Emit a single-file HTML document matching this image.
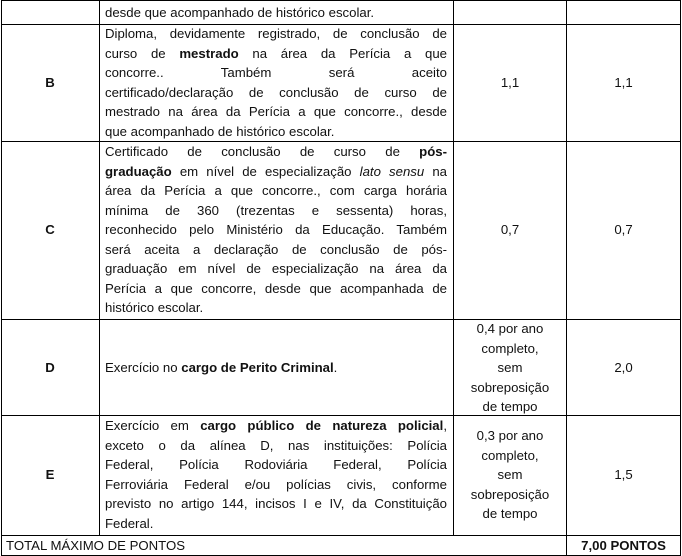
<!DOCTYPE html><html><head><meta charset="utf-8"><style>
body{margin:0;width:682px;height:556px;background:#fff;position:relative;overflow:hidden;font-family:"Liberation Sans",sans-serif;font-size:13.2px;color:#111}
.h{position:absolute;height:1px;background:#000;left:1px;width:680px}
.v{position:absolute;width:1px;background:#000}
.t{position:absolute;left:105px;width:342px;line-height:19.5px}
.t div{text-align:justify;text-align-last:justify;white-space:nowrap}
.t div.l{text-align-last:left}
.c{position:absolute;text-align:center;line-height:19.5px}
b{font-weight:bold}
</style></head><body>
<div class="h" style="top:0"></div>
<div class="h" style="top:24px"></div>
<div class="h" style="top:141px"></div>
<div class="h" style="top:319px"></div>
<div class="h" style="top:415px"></div>
<div class="h" style="top:535px"></div>
<div class="h" style="top:555px"></div>
<div class="v" style="left:1px;top:0;height:556px"></div>
<div class="v" style="left:99px;top:0;height:535px"></div>
<div class="v" style="left:453px;top:0;height:535px"></div>
<div class="v" style="left:566px;top:0;height:556px"></div>
<div class="v" style="left:680px;top:0;height:556px"></div>

<div class="t" style="top:3px"><div class="l">desde que acompanhado de histórico escolar.</div></div>

<div class="c" style="left:1px;width:98px;top:73px"><b>B</b></div>
<div class="t" style="top:24px">
<div>Diploma, devidamente registrado, de conclusão de</div>
<div>curso de <b>mestrado</b> na área da Perícia a que</div>
<div>concorre.. Também será aceito</div>
<div>certificado/declaração de conclusão de curso de</div>
<div>mestrado na área da Perícia a que concorre., desde</div>
<div class="l">que acompanhado de histórico escolar.</div></div>
<div class="c" style="left:454px;width:112px;top:73px">1,1</div>
<div class="c" style="left:567px;width:113px;top:73px">1,1</div>

<div class="c" style="left:1px;width:98px;top:220px"><b>C</b></div>
<div class="t" style="top:142px">
<div>Certificado de conclusão de curso de <b>pós-</b></div>
<div><b>graduação</b> em nível de especialização <i>lato sensu</i> na</div>
<div>área da Perícia a que concorre., com carga horária</div>
<div>mínima de 360 (trezentas e sessenta) horas,</div>
<div>reconhecido pelo Ministério da Educação. Também</div>
<div>será aceita a declaração de conclusão de pós-</div>
<div>graduação em nível de especialização na área da</div>
<div>Perícia a que concorre, desde que acompanhada de</div>
<div class="l">histórico escolar.</div></div>
<div class="c" style="left:454px;width:112px;top:220px">0,7</div>
<div class="c" style="left:567px;width:113px;top:220px">0,7</div>

<div class="c" style="left:1px;width:98px;top:358px"><b>D</b></div>
<div class="t" style="top:358px"><div class="l">Exercício no <b>cargo de Perito Criminal</b>.</div></div>
<div class="c" style="left:454px;width:112px;top:319px">0,4 por ano<br>completo,<br>sem<br>sobreposição<br>de tempo</div>
<div class="c" style="left:567px;width:113px;top:358px">2,0</div>

<div class="c" style="left:1px;width:98px;top:465px"><b>E</b></div>
<div class="t" style="top:416px">
<div>Exercício em <b>cargo público de natureza policial</b>,</div>
<div>exceto o da alínea D, nas instituições: Polícia</div>
<div>Federal, Polícia Rodoviária Federal, Polícia</div>
<div>Ferroviária Federal e/ou polícias civis, conforme</div>
<div>previsto no artigo 144, incisos I e IV, da Constituição</div>
<div class="l">Federal.</div></div>
<div class="c" style="left:454px;width:112px;top:426px">0,3 por ano<br>completo,<br>sem<br>sobreposição<br>de tempo</div>
<div class="c" style="left:567px;width:113px;top:465px">1,5</div>

<div style="position:absolute;left:6px;top:536px;line-height:19px">TOTAL MÁXIMO DE PONTOS</div>
<div class="c" style="left:567px;width:113px;top:536px;line-height:19px"><b>7,00 PONTOS</b></div>
</body></html>
